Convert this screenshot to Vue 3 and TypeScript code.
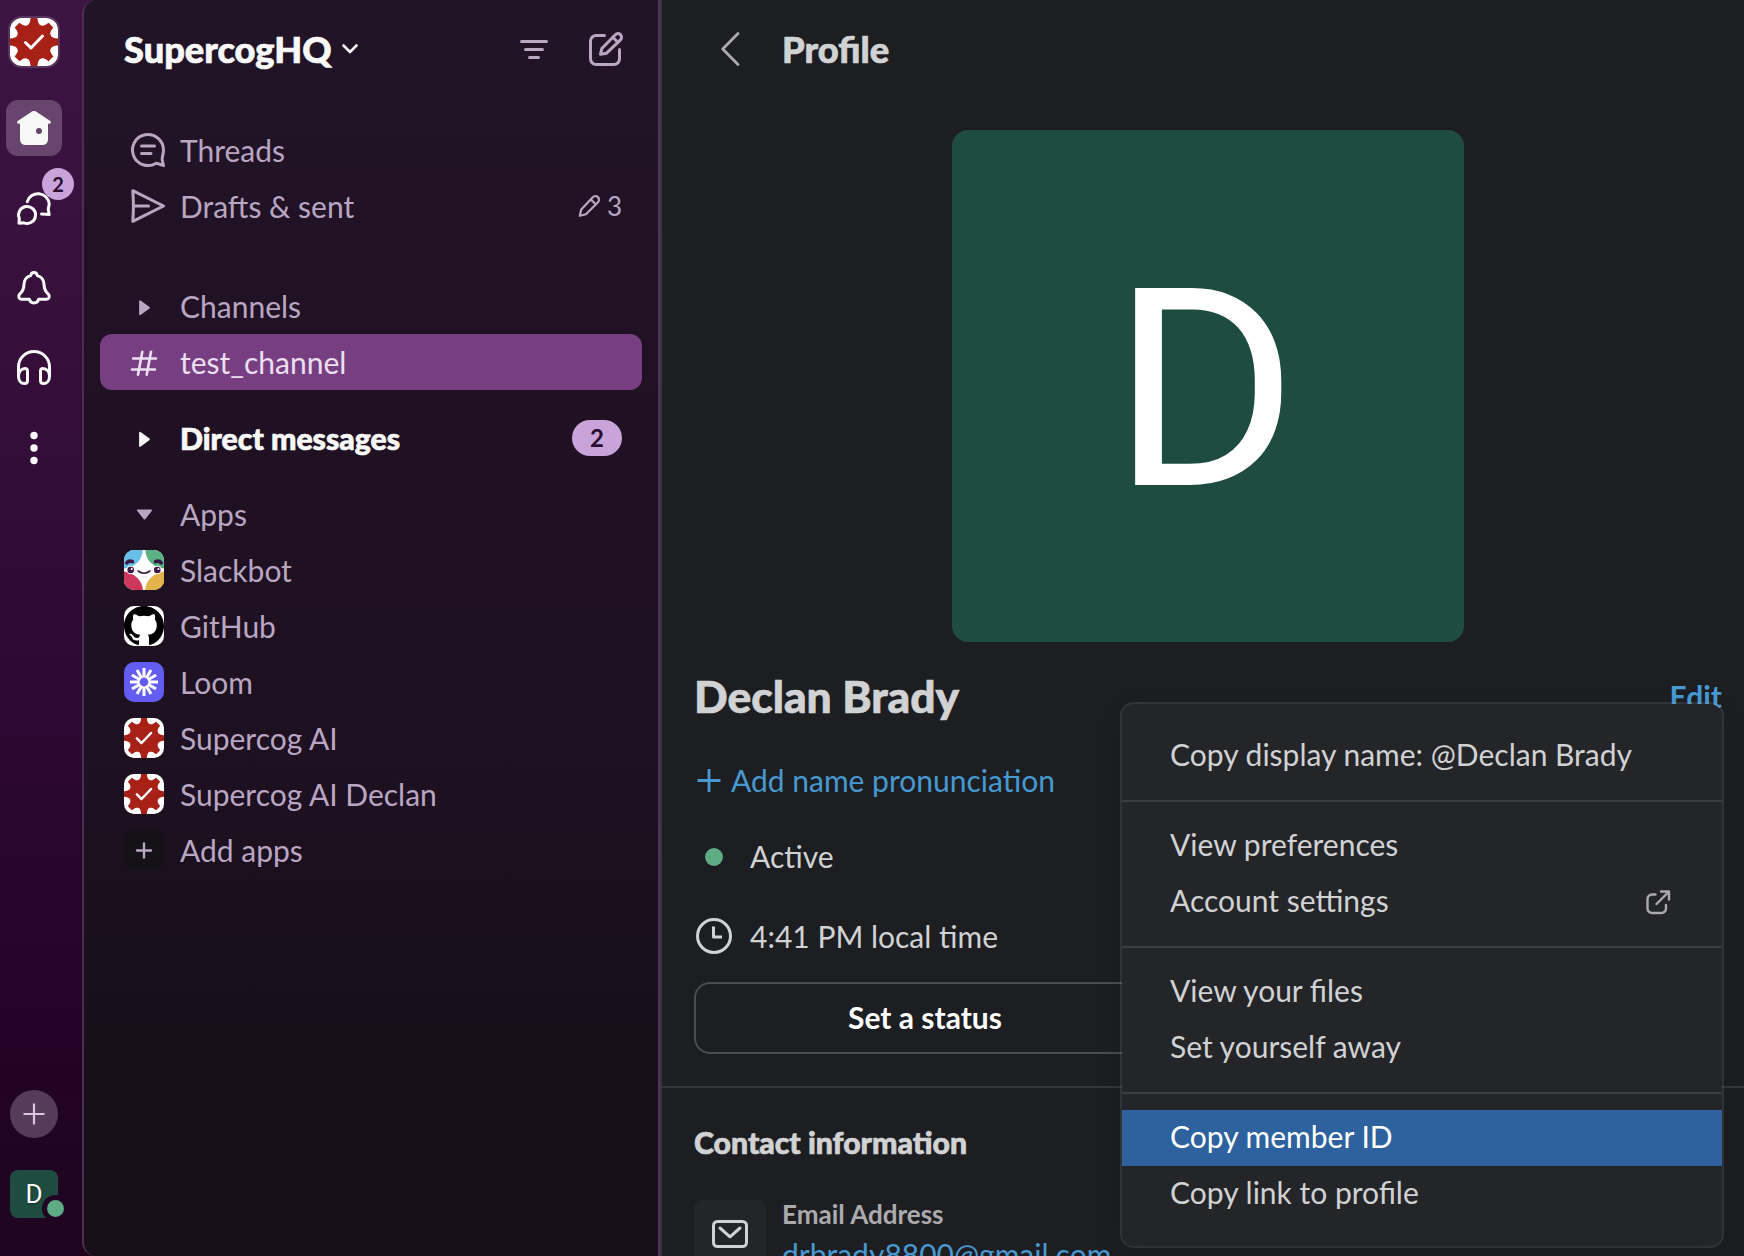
<script setup lang="ts">
interface AppItem {
  name: string
  icon: 'slackbot' | 'github' | 'loom' | 'gear' | 'plus'
}

interface MenuItem {
  label: string
  external?: boolean
  active?: boolean
}

const apps: AppItem[] = [
  { name: 'Slackbot', icon: 'slackbot' },
  { name: 'GitHub', icon: 'github' },
  { name: 'Loom', icon: 'loom' },
  { name: 'Supercog AI', icon: 'gear' },
  { name: 'Supercog AI Declan', icon: 'gear' },
  { name: 'Add apps', icon: 'plus' },
]

const menuGroups: MenuItem[][] = [
  [{ label: 'Copy display name: @Declan Brady' }],
  [{ label: 'View preferences' }, { label: 'Account settings', external: true }],
  [{ label: 'View your files' }, { label: 'Set yourself away' }],
  [{ label: 'Copy member ID', active: true }, { label: 'Copy link to profile' }],
]

const teeth: number[] = [0, 45, 90, 135, 180, 225, 270, 315]
const rays: number[] = Array.from({ length: 12 }, (_, i) => i * 30)
</script>

<template>
  <div class="window">
    <nav class="rail">
      <div class="workspace">
        <svg viewBox="0 0 48 48" width="48" height="48">
          <rect width="48" height="48" fill="#fff" />
          <circle cx="24" cy="24" r="18" fill="#a82117" />
          <path
            v-for="t in teeth"
            :key="t"
            d="M17 8 Q20.2 6 20.6 0 H27.4 Q27.8 6 31 8 Z"
            fill="#a82117"
            :transform="`rotate(${t} 24 24)`"
          />
          <path d="M15.5 24.5 L21 30 L32.5 18" class="check" />
        </svg>
      </div>
      <div class="tabs">
        <div class="tab selected">
          <svg class="i40" viewBox="0 0 40 40">
            <path
              fill="#f8f8f8"
              fill-rule="evenodd"
              d="M20 3C18.8 3 17.8 3.5 16.9 4.2L3.7 13C2.2 14.2 3.4 16.2 5 15.7L6 15.4V31.5A5.5 5.5 0 0 0 11.5 37H28.5A5.5 5.5 0 0 0 34 31.5V15.4L35 15.7C36.600 16.200 37.800 14.200 36.300 13L23.100 4.200C22.200 3.500 21.200 3 20 3ZM25 20A3 3 0 1 1 25 26A3 3 0 1 1 25 20Z"
            />
          </svg>
        </div>
        <div class="tab">
          <svg class="i40 line white" viewBox="0 0 40 40">
            <path d="M5 35.200L5.300 30.400A8.500 8.500 0 1 1 9.800 34.800Z" />
            <path d="M13.300 13.700A11.200 11.200 0 0 1 35.200 15.800C35.200 18.500 34 20 34.300 21.700L35.200 26.500L27.600 26" />
          </svg>
          <span class="tab-badge">2</span>
        </div>
        <div class="tab">
          <svg class="i40 line white" viewBox="0 0 40 40">
            <path
              d="M20 4.600C21.900 4.600 23 5.900 23.300 7.600C28.300 9 30.100 12.700 30.100 17.200C30.100 21.600 32 24 34.500 26.400C36.300 28.300 35 31.200 32.600 31.200H24.700C24 33.900 22.200 35 20 35S16 33.900 15.300 31.200H7.400C5 31.200 3.700 28.300 5.500 26.400C8 24 9.900 21.600 9.900 17.200C9.900 12.700 11.700 9 16.700 7.600C17 5.900 18.100 4.600 20 4.600Z"
            />
          </svg>
        </div>
        <div class="tab">
          <svg class="i40 line white" viewBox="0 0 40 40">
            <path d="M4.500 28V19A15.500 15.500 0 0 1 35.500 19V28" />
            <path d="M4.500 28C4.500 32.500 7 35.500 10.500 35.500C12.800 35.500 13.500 34.500 13.500 32.500V23C13.500 21 12.600 20.500 11 20.500C7.500 20.500 4.500 23.500 4.500 28Z" />
            <path d="M35.500 28C35.500 32.500 33 35.500 29.500 35.500C27.200 35.500 26.500 34.500 26.500 32.500V23C26.500 21 27.400 20.500 29 20.500C32.500 20.500 35.500 23.500 35.500 28Z" />
          </svg>
        </div>
        <div class="tab">
          <svg class="i40" viewBox="0 0 40 40" fill="#f8f8f8">
            <circle cx="20" cy="7.500" r="3.700" />
            <circle cx="20" cy="20" r="3.700" />
            <circle cx="20" cy="32.500" r="3.700" />
          </svg>
        </div>
      </div>
      <div class="create">
        <svg class="i40" viewBox="0 0 40 40">
          <path d="M20 9.500V30.500M9.500 20H30.500" stroke="#d9c6de" stroke-width="2.200" />
        </svg>
      </div>
      <div class="me">
        D
        <span class="presence"></span>
      </div>
    </nav>

    <aside class="sidebar">
      <header class="side-head">
        <h1>SupercogHQ</h1>
        <svg class="chev" viewBox="0 0 20 14" width="20" height="14">
          <path d="M3.500 3.500L10 10L16.500 3.500" />
        </svg>
        <svg class="i40 line filter" viewBox="0 0 40 40">
          <path d="M7.500 12.500H32.500M11.500 20.500H28.500M15.500 28.500H24.500" />
        </svg>
        <svg class="i40 line" viewBox="0 0 40 40">
          <path d="M18.500 6.500H10.200A5.700 5.700 0 0 0 4.500 12.200V29.800A5.700 5.700 0 0 0 10.200 35.500H27.800A5.700 5.700 0 0 0 33.500 29.800V20.500" />
          <path d="M14.500 25.300L15.800 19.500L29.300 5.700A3.600 3.600 0 0 1 34.500 10.800L20.600 24.200Z" />
          <path d="M26.800 8.300L31.900 13.300" />
        </svg>
      </header>

      <div class="rows">
        <div class="row nav">
          <svg class="i40 line" viewBox="0 0 40 40">
            <path d="M28.200 33.200A15.500 15.500 0 1 1 35.500 20C35.500 24.500 33.800 27.500 34.200 29.800L35.500 35.500L31 34Q29.500 33.300 28.200 33.200Z" />
            <path d="M13.500 16H26.500M13.500 23.500H23" />
          </svg>
          <span>Threads</span>
        </div>
        <div class="row nav">
          <svg class="i40 line" viewBox="0 0 40 40">
            <path d="M4.800 4.700L35.500 20L4.800 35.300Q5.400 27 5.400 20T4.800 4.700ZM5.400 20H20.500" />
          </svg>
          <span>Drafts &amp; sent</span>
          <span class="count">
            <svg class="line pencil" viewBox="0 0 24 24" width="24" height="24">
              <path d="M2.800 21.800L4.200 15.600L15.800 3.200A3.400 3.400 0 0 1 21 8.200L9 20.200Z" />
              <path d="M13.800 5.500L18.700 10.300" />
            </svg>
            3
          </span>
        </div>
      </div>

      <div class="rows channels">
        <div class="row">
          <svg class="i40" viewBox="0 0 40 40">
            <path class="caret" d="M16 15.200V28.200L25 21.700Z" />
          </svg>
          <span>Channels</span>
        </div>
        <div class="row current">
          <svg class="i40 line hash" viewBox="0 0 40 40">
            <path d="M18.300 9.800L14 32.800M27 9.800L22.700 32.800M9.200 16.500H32M8 27.500H31" />
          </svg>
          <span>test_channel</span>
        </div>
      </div>

      <div class="rows section">
        <div class="row unread">
          <svg class="i40" viewBox="0 0 40 40">
            <path class="caret" d="M16 14.700V27.900L25 21.300Z" />
          </svg>
          <span class="strong">Direct messages</span>
          <span class="pill">2</span>
        </div>
      </div>

      <div class="rows section">
        <div class="row">
          <svg class="i40" viewBox="0 0 40 40">
            <path class="caret" d="M13.800 16.300H27.200L20.500 24.600Z" />
          </svg>
          <span>Apps</span>
        </div>
        <div v-for="app in apps" :key="app.name" class="row">
          <svg v-if="app.icon === 'slackbot'" class="i40 logo" viewBox="0 0 40 40">
            <rect width="40" height="40" fill="#fff" />
            <path d="M0 0H18.700C18.500 9 12 17.500 0 18.500Z" fill="#66c0ea" />
            <path d="M40 0H21.300C21.500 9 28 17.500 40 18.500Z" fill="#5ab283" />
            <path d="M0 21.500C11 23 18.300 31 18.900 40H0Z" fill="#ce375c" />
            <path d="M40 21.500C29 23 21.700 31 21.100 40H40Z" fill="#e3b34c" />
            <circle cx="6.700" cy="20" r="4.200" fill="#fff" />
            <circle cx="33.300" cy="20" r="4.200" fill="#fff" />
            <circle cx="6.700" cy="20" r="3.300" fill="#3c1542" />
            <circle cx="33.300" cy="20" r="3.300" fill="#3c1542" />
            <circle cx="7.800" cy="19" r="1.100" fill="#fff" />
            <circle cx="34.400" cy="19" r="1.100" fill="#fff" />
            <path d="M2.800 12.800Q5 10.200 8.500 11.600M37.200 12.800Q35 10.200 31.500 11.600" stroke="#3c1542" stroke-width="3.600" stroke-linecap="round" fill="none" />
            <path d="M14 21Q20 25.500 26 21" stroke="#3c1542" stroke-width="1.600" stroke-linecap="round" fill="none" />
            <path d="M17.500 27H22.500" stroke="#e0dfe1" stroke-width="1.200" stroke-linecap="round" />
          </svg>
          <svg v-else-if="app.icon === 'github'" class="i40 logo" viewBox="0 0 16 16">
            <rect width="16" height="16" fill="#fff" />
            <path
              fill="#000"
              d="M8 0C3.580 0 0 3.580 0 8c0 3.540 2.290 6.530 5.470 7.590.4.070.55-.170.55-.380 0-.190-.010-.820-.010-1.490-2.010.370-2.530-.490-2.690-.940-.090-.230-.480-.940-.820-1.130-.280-.150-.680-.520-.010-.530.630-.010 1.080.580 1.230.820.720 1.210 1.870.870 2.330.660.070-.520.280-.870.510-1.070-1.780-.2-3.640-.890-3.640-3.950 0-.870.310-1.590.820-2.150-.080-.2-.360-1.020.080-2.120 0 0 .670-.210 2.200.820.640-.180 1.320-.270 2-.270.680 0 1.360.090 2 .270 1.530-1.040 2.200-.820 2.200-.820.440 1.100.160 1.920.080 2.120.510.560.820 1.270.820 2.150 0 3.070-1.870 3.750-3.650 3.950.290.250.540.730.540 1.480 0 1.070-.010 1.930-.010 2.200 0 .210.150.460.550.380A8.013 8.013 0 0 0 16 8c0-4.420-3.580-8-8-8z"
            />
          </svg>
          <svg v-else-if="app.icon === 'loom'" class="i40 logo" viewBox="0 0 40 40">
            <rect width="40" height="40" fill="#625df0" />
            <path v-for="r in rays" :key="r" d="M18.500 6H21.500V15H18.500Z" fill="#fff" :transform="`rotate(${r} 20 20)`" />
            <circle cx="20" cy="20" r="5.400" fill="none" stroke="#fff" stroke-width="2" />
          </svg>
          <svg v-else-if="app.icon === 'gear'" class="i40 logo" viewBox="0 0 48 48">
            <rect width="48" height="48" fill="#fff" />
            <circle cx="24" cy="24" r="18" fill="#a82117" />
            <path
              v-for="t in teeth"
              :key="t"
              d="M17 8 Q20.2 6 20.6 0 H27.4 Q27.8 6 31 8 Z"
              fill="#a82117"
              :transform="`rotate(${t} 24 24)`"
            />
            <path d="M15.5 24.5 L21 30 L32.5 18" class="check" />
          </svg>
          <svg v-else class="i40 logo" viewBox="0 0 40 40">
            <rect width="40" height="40" fill="#151217" />
            <path d="M20 13.500V27.500M13 20.500H27" stroke="#b9a5c2" stroke-width="2.400" stroke-linecap="round" />
          </svg>
          <span>{{ app.name }}</span>
        </div>
      </div>
    </aside>

    <main class="profile">
      <header class="main-head">
        <svg class="i40 back" viewBox="0 0 40 40">
          <path d="M28 4.500L12.700 20L28 35.500" />
        </svg>
        <h2>Profile</h2>
      </header>
      <div class="content">
        <div class="avatar"><span class="initial">D</span></div>
        <div class="name-line">
          <h3>Declan Brady</h3>
          <a class="edit">Edit</a>
        </div>
        <a class="info pron">
          <svg viewBox="0 0 30 40" width="30" height="40">
            <path d="M15 9V32M3.500 20.500H26.500" stroke="currentColor" stroke-width="2.800" />
          </svg>
          <span>Add name pronunciation</span>
        </a>
        <div class="info active-line">
          <span class="icon-col"><i class="dot"></i></span>
          <span>Active</span>
        </div>
        <div class="info time-line">
          <span class="icon-col">
            <svg class="i40 line" viewBox="0 0 40 40">
              <circle cx="20" cy="20" r="16.500" />
              <path d="M19.500 10.500V21H28" stroke-linecap="butt" />
            </svg>
          </span>
          <span>4:41 PM local time</span>
        </div>
        <button class="status">Set a status</button>
      </div>
      <section class="contact">
        <h4>Contact information</h4>
        <div class="contact-row">
          <div class="tile">
            <svg class="i40 line" viewBox="0 0 40 40">
              <rect x="3.500" y="7.500" width="33" height="25" rx="4" />
              <path d="M10 14L20 22.800L30 14" />
            </svg>
          </div>
          <div class="contact-text">
            <span class="label">Email Address</span>
            <a>drbrady8800@gmail.com</a>
          </div>
        </div>
      </section>
    </main>

    <div class="menu">
      <div v-for="(group, g) in menuGroups" :key="g" class="group">
        <div v-for="item in group" :key="item.label" class="item" :class="{ on: item.active }">
          <span>{{ item.label }}</span>
          <svg v-if="item.external" class="line ext" viewBox="0 0 28 28" width="28" height="28">
            <path d="M11.500 6.500H8A4.500 4.500 0 0 0 3.500 11V20.500A4.500 4.500 0 0 0 8 25H17.500A4.500 4.500 0 0 0 22 20.500V17" />
            <path d="M17 3.500H25V11.500M25 3.500L12.500 16" />
          </svg>
        </div>
      </div>
    </div>
  </div>
</template>

<style>
body {
  margin: 0;
  background: #1d1e22;
}
</style>

<style scoped>
.window {
  position: relative;
  display: flex;
  width: 1744px;
  height: 1256px;
  overflow: hidden;
  font-family: Lato, 'Liberation Sans', sans-serif;
  font-size: 30px;
  color: #d1d2d3;
  background: linear-gradient(180deg, #3d1443 0%, #350f3a 30%, #220326 85%, #20041f 100%);
}
h1, h2, h3, h4 {
  margin: 0;
}
h1, h2, h3, h4, .strong {
  font-weight: 900;
  -webkit-text-stroke: 0.7px currentColor;
}
.strong {
  font-size: 30.2px;
}
.i40 {
  display: block;
  flex: none;
  width: 40px;
  height: 40px;
}
.line {
  fill: none;
  stroke: currentColor;
  stroke-width: 3;
  stroke-linecap: round;
  stroke-linejoin: round;
}
.white {
  color: #f8f8f8;
}
.check {
  fill: none;
  stroke: #fff;
  stroke-width: 3;
  stroke-linecap: round;
  stroke-linejoin: round;
}

/* Left rail */
.rail {
  display: flex;
  flex: none;
  flex-direction: column;
  align-items: center;
  box-sizing: border-box;
  width: 82px;
  padding: 18px 14px 38px 0;
}
.workspace {
  width: 48px;
  height: 48px;
  border-radius: 12px;
  box-shadow: 0 0 0 2px rgba(255, 255, 255, 0.14);
}
.workspace svg {
  display: block;
  border-radius: 12px;
}
.tabs {
  display: flex;
  flex-direction: column;
  gap: 24px;
  margin-top: 34px;
}
.tab {
  position: relative;
  display: flex;
  align-items: center;
  justify-content: center;
  width: 56px;
  height: 56px;
  border-radius: 12px;
}
.selected {
  background: #67456c;
}
.tab-badge {
  position: absolute;
  top: -12px;
  left: 36px;
  width: 32px;
  height: 32px;
  border-radius: 16px;
  background: #c8a4da;
  color: #2b0b30;
  font-size: 20px;
  font-weight: 700;
  line-height: 32px;
  text-align: center;
}
.create {
  display: flex;
  align-items: center;
  justify-content: center;
  width: 48px;
  height: 48px;
  margin-top: auto;
  border-radius: 50%;
  background: #563b5a;
}
.me {
  position: relative;
  width: 48px;
  height: 48px;
  margin-top: 32px;
  border-radius: 8px;
  background: #1f4c41;
  color: #fff;
  font-family: Roboto, sans-serif;
  font-size: 26px;
  line-height: 49px;
  text-align: center;
  text-shadow: 0 1px 2px rgba(0, 0, 0, 0.4);
}
.presence {
  position: absolute;
  top: 25px;
  left: 32px;
  width: 17px;
  height: 17px;
  border: 5px solid #210424;
  border-radius: 50%;
  background: #5fab83;
}

/* Channel sidebar */
.sidebar {
  display: flex;
  flex: none;
  flex-direction: column;
  box-sizing: border-box;
  width: 578px;
  border-left: 2px solid #49304f;
  border-right: 2px solid #50325a;
  border-radius: 14px 0 0 14px;
  background: linear-gradient(180deg, #221427 0%, #1f1122 40%, #1d1020 65%, #160e18 90%, #170e19 100%);
  color: #b9a6c2;
}
.side-head {
  display: flex;
  align-items: center;
  height: 98px;
  margin-bottom: 24px;
  padding: 0 32px 0 40px;
}
.side-head h1 {
  color: #f8f8f8;
  font-size: 36.2px;
  line-height: 44px;
}
.chev {
  margin-left: 8px;
  fill: none;
  stroke: #f8f8f8;
  stroke-width: 2.600;
  stroke-linecap: round;
  stroke-linejoin: round;
}
.filter {
  margin-left: auto;
  margin-right: 32px;
}
.rows {
  display: flex;
  flex-direction: column;
  padding: 0 16px;
}
.channels {
  margin-top: 44px;
}
.section {
  margin-top: 20px;
}
.row {
  display: flex;
  align-items: center;
  gap: 16px;
  box-sizing: border-box;
  height: 56px;
  padding: 0 20px 0 24px;
  border-radius: 12px;
  line-height: 56px;
}
.nav {
  gap: 12px;
  padding-left: 28px;
}
.current {
  background: #773e82;
  color: #ecdff0;
}
.hash {
  stroke-width: 2.600;
}
.unread {
  color: #f8f8f8;
}
.caret {
  fill: currentColor;
  stroke: currentColor;
  stroke-width: 1.800;
  stroke-linejoin: round;
}
.logo {
  border-radius: 10px;
}
.count {
  display: flex;
  align-items: center;
  gap: 6px;
  margin-left: auto;
  font-size: 26px;
}
.pencil {
  stroke-width: 2.200;
}
.pill {
  width: 50px;
  height: 36px;
  margin-left: auto;
  border-radius: 18px;
  background: #c8a4da;
  color: #2b0b30;
  font-size: 24px;
  font-weight: 700;
  line-height: 36px;
  text-align: center;
}

/* Profile pane */
.profile {
  flex: 1;
  min-width: 0;
  border-left: 2px solid #36373b;
  background: #1d1e22;
}
.main-head {
  display: flex;
  align-items: center;
  gap: 32px;
  height: 98px;
  padding-left: 48px;
}
.back {
  fill: none;
  stroke: #ababad;
  stroke-width: 2.800;
  stroke-linecap: round;
  stroke-linejoin: round;
}
.main-head h2 {
  font-size: 36.3px;
  line-height: 44px;
}
.content {
  display: flex;
  flex-direction: column;
  padding: 32px 22px 32px 32px;
  border-bottom: 2px solid #36373b;
}
.avatar {
  align-self: center;
  width: 512px;
  height: 512px;
  border-radius: 16px;
  background: #1f4c41;
  color: #fff;
  font-family: Roboto, sans-serif;
  font-size: 277px;
  line-height: 522px;
  text-align: center;
}
.initial {
  display: inline-block;
  transform: translateX(-3px) scaleX(1.025);
}
.name-line {
  display: flex;
  align-items: center;
  justify-content: space-between;
  margin-top: 26px;
}
.name-line h3 {
  font-size: 44.3px;
  line-height: 56px;
}
a {
  color: #4799d1;
}
.edit {
  font-weight: 700;
  line-height: 44px;
}
.info {
  display: flex;
  align-items: center;
  height: 44px;
  line-height: 44px;
}
.pron {
  gap: 7px;
  margin-top: 34px;
}
.active-line {
  gap: 16px;
  margin-top: 32px;
}
.time-line {
  gap: 16px;
  margin-top: 36px;
}
.icon-col {
  display: flex;
  align-items: center;
  justify-content: center;
  width: 40px;
}
.dot {
  width: 18px;
  height: 18px;
  margin-top: 2px;
  border-radius: 50%;
  background: #5fab83;
}
.status {
  box-sizing: border-box;
  width: 462px;
  height: 72px;
  margin-top: 24px;
  padding: 0 0 2px;
  border: 2px solid #4b4c50;
  border-radius: 16px;
  background: transparent;
  color: #fff;
  font: 700 30px Lato, sans-serif;
}
.contact {
  padding: 32px 32px 0;
}
.contact h4 {
  font-size: 30.2px;
  line-height: 44px;
}
.contact-row {
  display: flex;
  gap: 16px;
  margin-top: 36px;
}
.tile {
  display: flex;
  align-items: center;
  justify-content: center;
  box-sizing: border-box;
  width: 72px;
  height: 72px;
  padding-bottom: 4px;
  border-radius: 8px;
  background: #242529;
}
.contact-text {
  display: flex;
  flex-direction: column;
  line-height: 44px;
}
.label {
  margin-bottom: 4px;
  color: #ababad;
  font-size: 26px;
  font-weight: 700;
  line-height: 28px;
}

/* Overflow menu */
.menu {
  position: absolute;
  top: 704px;
  left: 1122px;
  box-sizing: border-box;
  width: 600px;
  height: 542px;
  padding: 24px 0;
  border-radius: 12px;
  background: #242529;
  box-shadow: 0 0 0 2px rgba(209, 210, 211, 0.13), 0 8px 24px rgba(0, 0, 0, 0.15);
}
.group + .group {
  margin-top: 16px;
  padding-top: 16px;
  border-top: 2px solid #3b3c40;
}
.item {
  display: flex;
  justify-content: space-between;
  height: 56px;
  padding: 0 50px 0 48px;
  line-height: 52px;
}
.on {
  background: #2d629e;
  color: #fff;
}
.ext {
  margin-top: 14px;
  color: #ababad;
  stroke-width: 2.400;
}
</style>
